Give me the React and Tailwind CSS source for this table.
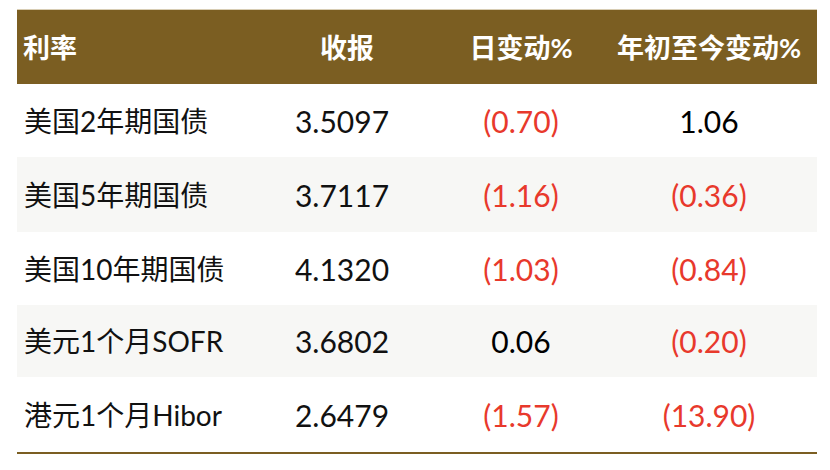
import React from "react"

const rows = [
  { name: "美国2年期国债", close: "3.5097", day: "(0.70)", ytd: "1.06", h: "h-[73px]" },
  { name: "美国5年期国债", close: "3.7117", day: "(1.16)", ytd: "(0.36)", h: "h-[75px]" },
  { name: "美国10年期国债", close: "4.1320", day: "(1.03)", ytd: "(0.84)", h: "h-[73px]" },
  { name: "美元1个月SOFR", close: "3.6802", day: "0.06", ytd: "(0.20)", h: "h-[72px]" },
  { name: "港元1个月Hibor", close: "2.6479", day: "(1.57)", ytd: "(13.90)", h: "h-[75px]" },
]

const cjk = "font-['Lato','Noto_Sans_CJK_SC',sans-serif]"

// negative numbers are shown in brackets and in red
const Num = ({ value }) => (
  <span className={value.startsWith("(") ? "text-[#e8392c]" : "text-black"}>{value}</span>
)

const App = () => {
  return (
    <div className={`w-[830px] h-[470px] bg-white pt-[9px] px-[17px] ${cjk}`}>
      <div className="w-[800px] border-t border-[#d8cdb4]">
        {/* header */}
        <div className="grid grid-cols-[243px_164px_194px_199px] h-[74px] items-center bg-[#7b5e22] text-white font-bold text-[27px] leading-none whitespace-nowrap">
          <div className="pl-[6px]">利率</div>
          <div className="flex justify-center pl-[10px]">收报</div>
          <div className="flex justify-center">日变动%</div>
          <div className="flex justify-center pr-[17px]">年初至今变动%</div>
        </div>

        {rows.map((r, i) => (
          <div
            key={r.name}
            className={`grid grid-cols-[243px_164px_194px_199px] items-center leading-none ${r.h} ${i % 2 === 1 ? "bg-[#f7f7f5]" : "bg-white"}`}
          >
            <div className="pl-[7px] text-[28px] text-[#111]">{r.name}</div>
            <div className="text-center text-[30px] text-[#111]">{r.close}</div>
            <div className="text-center text-[30px]">
              <Num value={r.day} />
            </div>
            <div className="text-center text-[30px] pr-[17px]">
              <Num value={r.ytd} />
            </div>
          </div>
        ))}

        <div className="h-[2px] bg-[#7b5e22]"></div>
      </div>
    </div>
  )
}

export default App
